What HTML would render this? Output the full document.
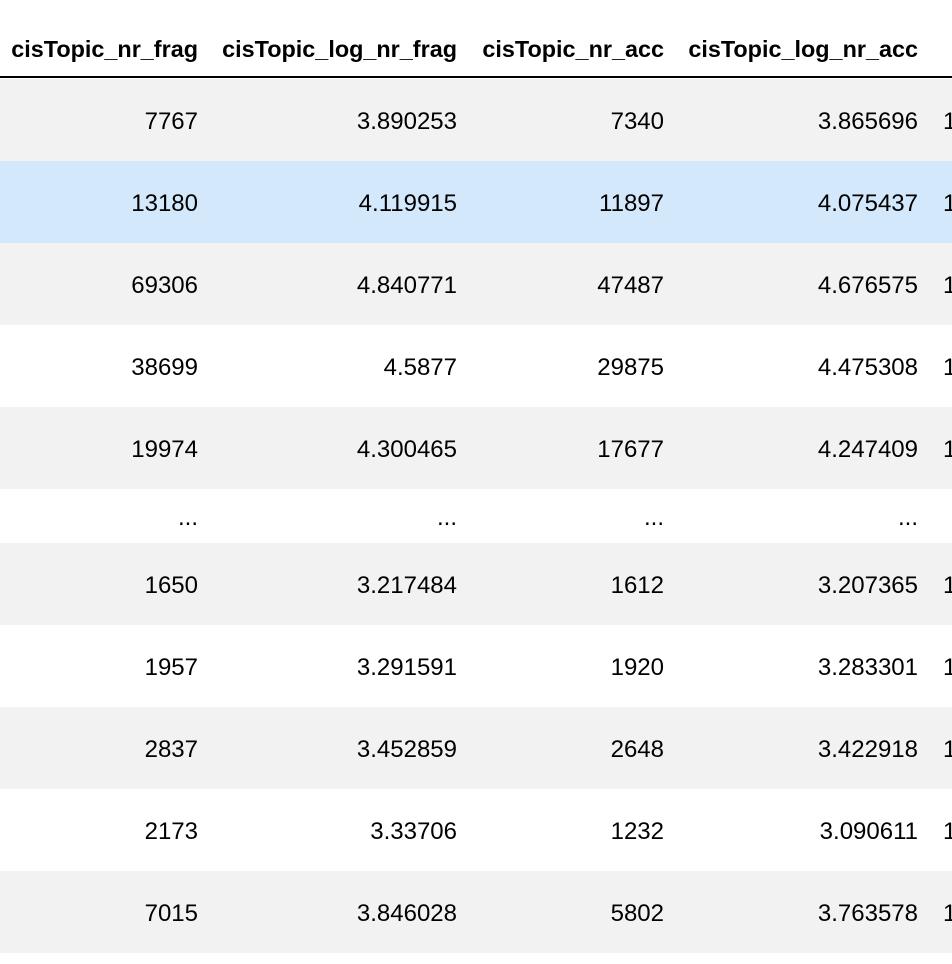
<!DOCTYPE html><html><head><style>
body{margin:0;width:952px;height:964px;background:#fff;font-family:"Liberation Sans",Arial,sans-serif;font-size:24px;color:#000;position:relative;overflow:hidden}
.h{position:absolute;top:36px;font-weight:bold;white-space:nowrap;font-size:23.4px}
.line{position:absolute;left:0;top:76px;width:952px;height:2px;background:#000}
.r{position:absolute;left:0;width:952px;height:82px}
.c{position:absolute;top:2px;line-height:82px;white-space:nowrap;text-align:right}
</style></head><body>
<div class="h" style="right:754px">cisTopic_nr_frag</div>
<div class="h" style="right:495px">cisTopic_log_nr_frag</div>
<div class="h" style="right:288px">cisTopic_nr_acc</div>
<div class="h" style="right:34px">cisTopic_log_nr_acc</div>
<div class="line"></div>
<div id="rows"></div>
<script>
var d=[["7767","3.890253","7340","3.865696","#f2f2f2",79,82],
["13180","4.119915","11897","4.075437","#d4e8fb",161,82],
["69306","4.840771","47487","4.676575","#f2f2f2",243,82],
["38699","4.5877","29875","4.475308","#fff",325,82],
["19974","4.300465","17677","4.247409","#f2f2f2",407,82],
["...","...","...","...","#fff",489,54],
["1650","3.217484","1612","3.207365","#f2f2f2",543,82],
["1957","3.291591","1920","3.283301","#fff",625,82],
["2837","3.452859","2648","3.422918","#f2f2f2",707,82],
["2173","3.33706","1232","3.090611","#fff",789,82],
["7015","3.846028","5802","3.763578","#f2f2f2",871,82]];
var rights=[754,495,288,34],h="";
d.forEach(function(r){h+='<div class="r" style="top:'+r[5]+'px;height:'+r[6]+'px;background:'+r[4]+'">';
for(var i=0;i<4;i++)h+='<div class="c" style="right:'+rights[i]+'px;line-height:'+r[6]+'px">'+r[i]+'</div>';
if(r[0]!="...")h+='<div class="c" style="left:943px;line-height:'+r[6]+'px">1</div>';
h+='</div>';});
document.getElementById('rows').innerHTML=h;
</script>
</body></html>
